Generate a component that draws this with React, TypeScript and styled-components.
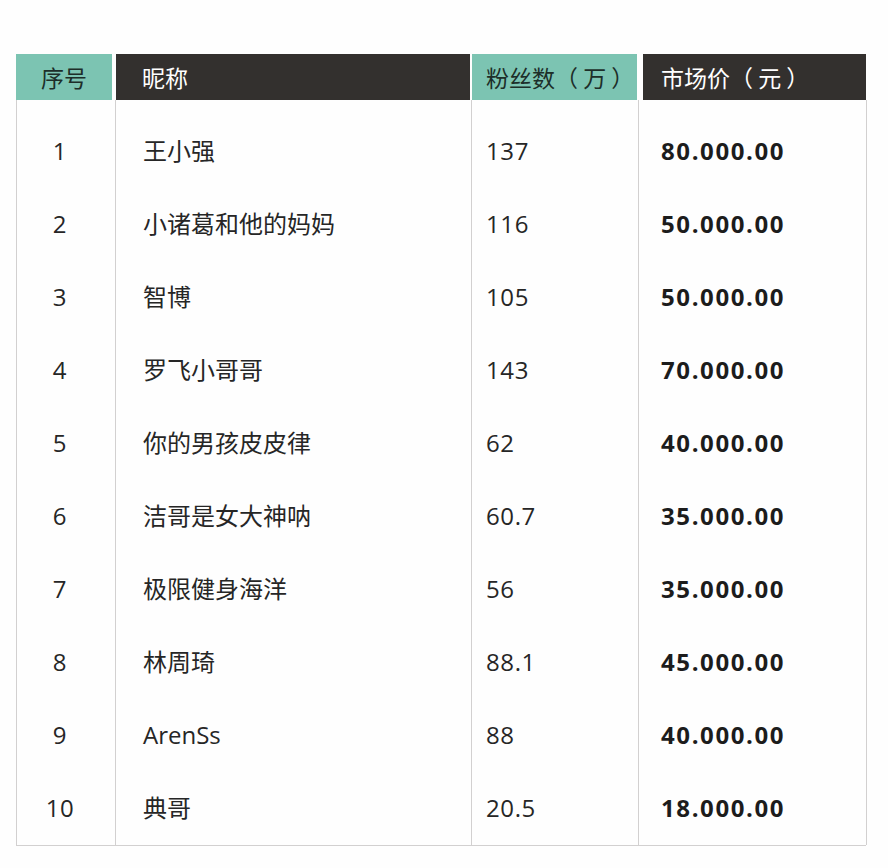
import React from 'react';
import styled, { createGlobalStyle } from 'styled-components';

const GlobalStyle = createGlobalStyle`
  html, body {
    margin: 0;
    padding: 0;
    background: #fefefe;
  }
  body {
    font-family: 'Open Sans', 'Noto Sans CJK SC', sans-serif;
    color: #222;
  }
`;

const COLS = '99px 356px 167px 228px';
const TEAL = '#7cc4b2';
const DARK = '#33302e';

const Page = styled.div`
  width: 888px;
  height: 868px;
  padding: 54px 0 0 16px;
  box-sizing: border-box;
`;

const Table = styled.div`
  width: 850px;
`;

const HeaderRow = styled.div`
  display: grid;
  grid-template-columns: ${COLS};
  height: 46px;
`;

type Tone = 'teal' | 'dark';

const HeadCell = styled.div<{ $tone: Tone; $ml?: number; $mr?: number; $center?: boolean; $pl?: number }>`
  display: flex;
  align-items: center;
  justify-content: ${(p) => (p.$center ? 'center' : 'flex-start')};
  margin-left: ${(p) => p.$ml ?? 0}px;
  margin-right: ${(p) => p.$mr ?? 0}px;
  padding-left: ${(p) => p.$pl ?? 0}px;
  background: ${(p) => (p.$tone === 'teal' ? TEAL : DARK)};
  color: ${(p) => (p.$tone === 'teal' ? '#1d2e29' : '#ffffff')};
  font-family: 'Noto Sans CJK SC', sans-serif;
  font-size: 23px;
  line-height: 1;
  white-space: pre;
`;

const Body = styled.div`
  display: grid;
  grid-template-columns: ${COLS};
  grid-template-rows: 87px repeat(9, 73.1px);
  border-left: 1px solid #d2d0d0;
  border-bottom: 1px solid #d2d0d0;
  box-sizing: border-box;
`;

const Row = styled.div`
  display: contents;
`;

type Kind = 'index' | 'name' | 'fans' | 'price';

const Cell = styled.div<{ $kind: Kind; $first?: boolean }>`
  display: flex;
  align-items: center;
  justify-content: ${(p) => (p.$kind === 'index' ? 'center' : 'flex-start')};
  padding-top: ${(p) => (p.$first ? 14 : 0)}px;
  padding-left: ${(p) =>
    p.$kind === 'name' ? 27 : p.$kind === 'fans' ? 14 : p.$kind === 'price' ? 22 : 0}px;
  padding-right: ${(p) => (p.$kind === 'index' ? 12 : 0)}px;
  border-right: 1px solid #d2d0d0;
  font-size: 24px;
  font-weight: ${(p) => (p.$kind === 'price' ? 700 : 400)};
  letter-spacing: ${(p) => (p.$kind === 'price' ? 1.6 : p.$kind === 'name' ? 0 : 0.6)}px;
  color: ${(p) => (p.$kind === 'price' ? '#1c1c1c' : '#262626')};
  line-height: 1;
  white-space: nowrap;
  box-sizing: border-box;
`;

const rows = [
  { name: '王小强', fans: '137', price: '80.000.00' },
  { name: '小诸葛和他的妈妈', fans: '116', price: '50.000.00' },
  { name: '智博', fans: '105', price: '50.000.00' },
  { name: '罗飞小哥哥', fans: '143', price: '70.000.00' },
  { name: '你的男孩皮皮律', fans: '62', price: '40.000.00' },
  { name: '洁哥是女大神呐', fans: '60.7', price: '35.000.00' },
  { name: '极限健身海洋', fans: '56', price: '35.000.00' },
  { name: '林周琦', fans: '88.1', price: '45.000.00' },
  { name: 'ArenSs', fans: '88', price: '40.000.00' },
  { name: '典哥', fans: '20.5', price: '18.000.00' },
];

export default function App() {
  return (
    <>
      <GlobalStyle />
      <Page>
        <Table>
          <HeaderRow>
            <HeadCell $tone="teal" $mr={3} $center>
              序号
            </HeadCell>
            <HeadCell $tone="dark" $ml={1} $mr={1} $pl={26}>
              昵称
            </HeadCell>
            <HeadCell $tone="teal" $ml={1} $mr={1} $pl={14}>
              粉丝数（ 万 ）
            </HeadCell>
            <HeadCell $tone="dark" $ml={5} $pl={18}>
              市场价（ 元 ）
            </HeadCell>
          </HeaderRow>
          <Body>
            {rows.map((r, i) => (
              <Row key={i}>
                <Cell $kind="index" $first={i === 0}>{i + 1}</Cell>
                <Cell $kind="name" $first={i === 0}>{r.name}</Cell>
                <Cell $kind="fans" $first={i === 0}>{r.fans}</Cell>
                <Cell $kind="price" $first={i === 0}>{r.price}</Cell>
              </Row>
            ))}
          </Body>
        </Table>
      </Page>
    </>
  );
}
